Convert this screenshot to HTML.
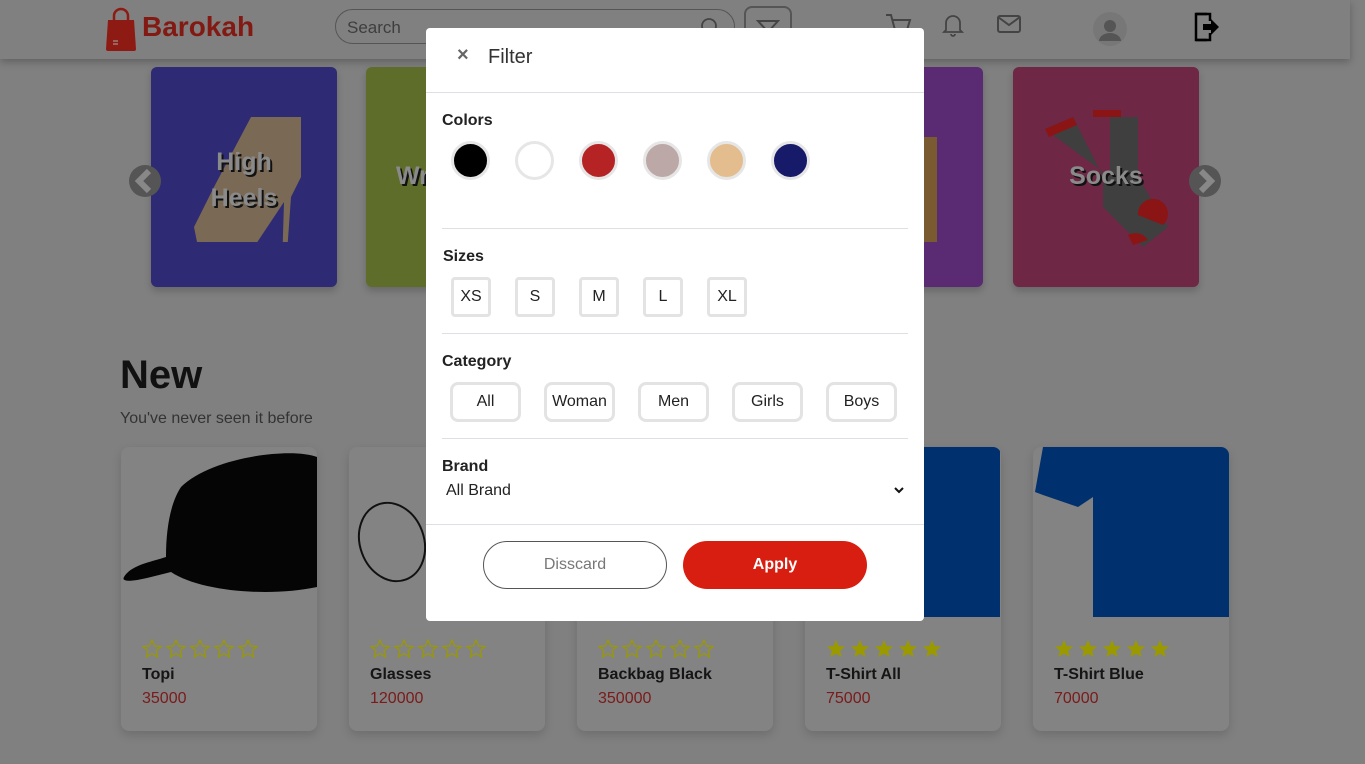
<!DOCTYPE html>
<html><head><meta charset="utf-8"><style>
*{box-sizing:border-box;margin:0;padding:0}
body{width:1365px;height:764px;overflow:hidden;background:#808080;font-family:"Liberation Sans",sans-serif;position:relative}
.nav{position:absolute;left:0;top:0;width:1350px;height:59px;background:#808080;box-shadow:0 3px 8px rgba(0,0,0,.25)}
.abs{position:absolute}
.cat{position:absolute;top:67px;width:186px;height:220px;border-radius:6px;box-shadow:0 4px 8px rgba(0,0,0,.2);overflow:hidden}
.cat span{position:absolute;left:0;right:0;text-align:center;color:#8a8a8a;font-weight:bold;font-size:25px;text-shadow:2px 2px 0 #111}
.card{position:absolute;top:447px;width:196px;height:284px;border-radius:8px;background:#838383;box-shadow:0 4px 10px rgba(0,0,0,.15);overflow:hidden}
.card .st{position:absolute;left:21px;top:192px}
.card .n{position:absolute;left:21px;top:219px;font-weight:bold;font-size:16px;color:#151515}
.card .p{position:absolute;left:21px;top:243px;font-size:16px;color:#7a1a1a}
.modal{position:absolute;left:426px;top:28px;width:498px;height:593px;background:#fff;border-radius:4px}
.hr{position:absolute;height:1px;background:#dedee3}
.lbl{position:absolute;font-weight:bold;font-size:16px;color:#222}
.dot{position:absolute;top:141px;width:39px;height:39px;border-radius:50%;border:3px solid #e6e6e6}
.sz{position:absolute;top:277px;width:40px;height:40px;border:3px solid #e3e3e3;border-radius:4px;text-align:center;line-height:34px;font-size:16px;color:#222}
.cg{position:absolute;top:382px;width:71px;height:40px;border:3px solid #e3e3e3;border-radius:8px;text-align:center;line-height:34px;font-size:16px;color:#222}
</style></head><body>
<svg width="0" height="0" style="position:absolute"><defs>
<path id="star" d="M10 1l2.6 6 6.4.5-4.9 4.2 1.5 6.3L10 14.6 4.4 18l1.5-6.3L1 7.5l6.4-.5z"/>
<g id="s5o" fill="none" stroke="#9a9a00" stroke-width="1.2"><use href="#star"/><use href="#star" x="24"/><use href="#star" x="48"/><use href="#star" x="72"/><use href="#star" x="96"/></g>
<g id="s5f" fill="#9a9a00"><use href="#star"/><use href="#star" x="24"/><use href="#star" x="48"/><use href="#star" x="72"/><use href="#star" x="96"/></g>
</defs></svg>
<div class="nav">
 <svg class="abs" style="left:105px;top:7px" width="32" height="45" viewBox="0 0 32 45"><path d="M9 14V9a7 7 0 0 1 14 0v5" fill="none" stroke="#8e1a14" stroke-width="2.5"/><path d="M3 13h26l2 29a2 2 0 0 1-2 2H3a2 2 0 0 1-2-2z" fill="#8e1a14"/><path d="M8 34h5M8 37h5" stroke="#aaa" stroke-width="1"/></svg>
 <div class="abs" style="left:142px;top:11px;font-size:28px;font-weight:bold;color:#821a13">Barokah</div>
 <div class="abs" style="left:335px;top:9px;width:400px;height:35px;border:1px solid #555;border-radius:18px"></div>
 <div class="abs" style="left:347px;top:18px;font-size:17px;color:#3e3e3e">Search</div>
 <svg class="abs" style="left:700px;top:17px" width="20" height="20"><circle cx="9" cy="9" r="7" fill="none" stroke="#444" stroke-width="1.8"/></svg>
 <div class="abs" style="left:744px;top:6px;width:48px;height:40px;border:2px solid #555;border-radius:8px"></div>
 <svg class="abs" style="left:756px;top:18px" width="24" height="16"><path d="M2 3h20l-10 11z" fill="none" stroke="#444" stroke-width="2"/></svg>
 <svg class="abs" style="left:884px;top:12px" width="28" height="26"><path d="M2 3h5l4 15h12l3-10H9" fill="none" stroke="#444" stroke-width="2"/></svg>
 <svg class="abs" style="left:942px;top:13px" width="22" height="24"><path d="M4 17V10a7 7 0 0 1 14 0v7l2 2H2z M9 21a2 2 0 0 0 4 0" fill="none" stroke="#444" stroke-width="1.8"/></svg>
 <svg class="abs" style="left:997px;top:15px" width="24" height="20"><rect x="1" y="1" width="22" height="16" rx="2" fill="none" stroke="#444" stroke-width="2"/><path d="M1 2l11 8 11-8" fill="none" stroke="#444" stroke-width="2"/></svg>
 <svg class="abs" style="left:1093px;top:12px" width="34" height="34"><circle cx="17" cy="17" r="17" fill="#777"/><circle cx="17" cy="14" r="6" fill="#555"/><path d="M6 29a11 8 0 0 1 22 0" fill="#555"/></svg>
 <svg class="abs" style="left:1193px;top:11px" width="30" height="32"><path d="M14 3H3v26h11" fill="none" stroke="#000" stroke-width="2.5"/><path d="M3 3h14v7M3 29h14v-7" fill="none" stroke="#000" stroke-width="2.5"/><path d="M10 13h8V8l8 8-8 8v-5h-8z" fill="#000"/></svg>
</div>
<div class="cat" style="left:151px;background:#2e2a74">
 <svg class="abs" style="left:35px;top:45px" width="120" height="130"><path d="M65 5l50 0 0 60-10 20 -5 70-4 0 2-65-30 45-55 5-5-25 20-40z" fill="#7a6a55"/></svg>
 <span style="top:77px;line-height:36px">High<br>Heels</span></div>
<div class="cat" style="left:366px;background:#5e6d2a"><span style="top:95px;text-align:left;left:30px">Wr</span></div>
<div class="cat" style="left:797px;width:186px;background:#5a2a72"><div class="abs" style="left:110px;top:70px;width:30px;height:105px;background:#7a5a30"></div></div>
<div class="cat" style="left:1013px;background:#6e2745">
 <svg class="abs" style="left:30px;top:40px" width="130" height="140"><path d="M2 22l28-12 30 60 0 30 40 40 25-20-30-50 0-60-28 0 0 60z" fill="#3f3f3f"/><path d="M2 22l28-12 4 8-28 12z M50 3h28v7H50z M95 108a15 15 0 1 1 25 10z M85 128a15 15 0 0 1 20 5l-15 5z" fill="#8b1515"/></svg>
 <span style="top:95px">Socks</span></div>
<svg class="abs" style="left:129px;top:165px" width="32" height="32"><circle cx="16" cy="16" r="16" fill="#555"/><path d="M20 6l-10 10 10 10" fill="none" stroke="#888" stroke-width="6"/></svg>
<svg class="abs" style="left:1189px;top:165px" width="32" height="32"><circle cx="16" cy="16" r="16" fill="#555"/><path d="M12 6l10 10-10 10" fill="none" stroke="#888" stroke-width="6"/></svg>
<div class="abs" style="left:120px;top:353px;font-size:40px;font-weight:bold;color:#111">New</div>
<div class="abs" style="left:120px;top:410px;font-size:16px;color:#333">You've never seen it before</div>
<div class="card" style="left:121px"><svg class="abs" style="left:0;top:0" width="196" height="180"><path d="M60 40C90 10 170 0 196 10V140C150 150 80 145 50 125L30 130C10 135 0 135 3 130 10 118 30 115 45 110 45 80 50 55 60 40z" fill="#050505"/></svg><svg class="st" width="120" height="20"><use href="#s5o"/></svg><div class="n">Topi</div><div class="p">35000</div></div>
<div class="card" style="left:349px"><svg class="abs" style="left:0;top:0" width="196" height="170"><path d="M78 70L130 35" stroke="#111" stroke-width="1.5"/><ellipse cx="43" cy="95" rx="32" ry="40" fill="none" stroke="#111" stroke-width="2" transform="rotate(-20 43 95)"/></svg><svg class="st" width="120" height="20"><use href="#s5o"/></svg><div class="n">Glasses</div><div class="p">120000</div></div>
<div class="card" style="left:577px"><svg class="st" width="120" height="20"><use href="#s5o"/></svg><div class="n">Backbag Black</div><div class="p">350000</div></div>
<div class="card" style="left:805px"><div class="abs" style="left:0;top:0;width:195px;height:170px;background:#00306e"></div><svg class="st" width="120" height="20"><use href="#s5f"/></svg><div class="n">T-Shirt All</div><div class="p">75000</div></div>
<div class="card" style="left:1033px"><svg class="abs" style="left:0;top:0" width="196" height="170"><path d="M10 0H196V170H60V50L45 60 10 48 2 45z" fill="#00306e"/></svg><svg class="st" width="120" height="20"><use href="#s5f"/></svg><div class="n">T-Shirt Blue</div><div class="p">70000</div></div>
<div class="modal">
 <div class="abs" style="left:31px;top:16px;font-size:20px;color:#666;font-weight:bold">×</div>
 <div class="abs" style="left:62px;top:18px;font-size:20px;color:#333">Filter</div>
 <div class="hr" style="left:0;right:0;top:64px"></div>
 <div class="lbl" style="left:16px;top:84px">Colors</div>
 <div class="hr" style="left:16px;width:466px;top:200px"></div>
 <div class="lbl" style="left:17px;top:220px">Sizes</div>
 <div class="hr" style="left:16px;width:466px;top:305px"></div>
 <div class="lbl" style="left:16px;top:325px">Category</div>
 <div class="hr" style="left:16px;width:466px;top:410px"></div>
 <div class="lbl" style="left:16px;top:430px">Brand</div>
 <div class="abs" style="left:20px;top:454px;font-size:16px;color:#222">All Brand</div>
 <svg class="abs" style="left:467px;top:457px" width="12" height="10"><path d="M2 3l4 4 4-4" fill="none" stroke="#111" stroke-width="2"/></svg>
 <div class="hr" style="left:0;right:0;top:496px"></div>
 <div class="abs" style="left:57px;top:513px;width:184px;height:48px;border:1px solid #555;border-radius:24px;text-align:center;line-height:46px;font-size:16px;color:#777">Disscard</div>
 <div class="abs" style="left:257px;top:513px;width:184px;height:48px;background:#d81e10;border-radius:24px;text-align:center;line-height:48px;font-size:16px;color:#fff;font-weight:bold">Apply</div>
</div>
<div class="dot" style="left:451px;background:#000"></div>
<div class="dot" style="left:515px;background:#fff"></div>
<div class="dot" style="left:579px;background:#b62324"></div>
<div class="dot" style="left:643px;background:#bca8a6"></div>
<div class="dot" style="left:707px;background:#e3bd8d"></div>
<div class="dot" style="left:771px;background:#161a68"></div>
<div class="sz" style="left:451px">XS</div><div class="sz" style="left:515px">S</div><div class="sz" style="left:579px">M</div><div class="sz" style="left:643px">L</div><div class="sz" style="left:707px">XL</div>
<div class="cg" style="left:450px">All</div><div class="cg" style="left:544px">Woman</div><div class="cg" style="left:638px">Men</div><div class="cg" style="left:732px">Girls</div><div class="cg" style="left:826px">Boys</div>
</body></html>
